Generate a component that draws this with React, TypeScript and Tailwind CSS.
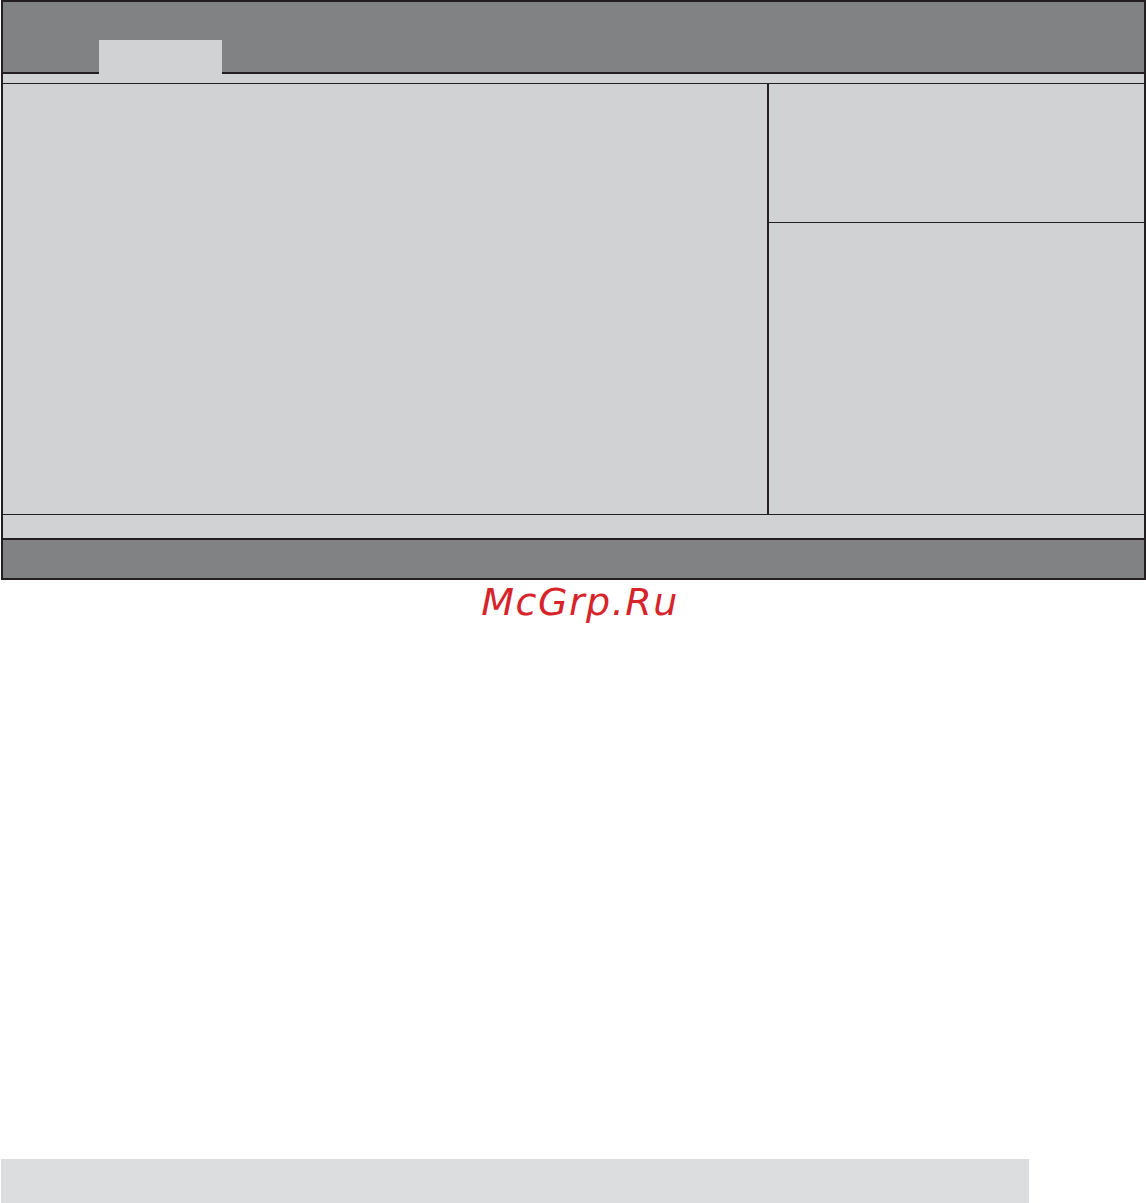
import React from 'react';

// Empty BIOS-style setup screen frame with a watermark below
const App: React.FC = () => {
  return (
    <div className="w-[1146px] h-[1203px] bg-white overflow-hidden">
      {/* Main frame */}
      <div className="ml-px w-[1145px] h-[580px] border-2 border-[#231f20] flex flex-col bg-[#d1d2d4]">
        {/* Header with the active tab */}
        <div className="h-[72px] shrink-0 bg-[#818284] border-b-2 border-[#231f20] flex items-end pl-[96px]">
          <div className="relative w-[123px] h-[34px] -mb-[2px] bg-[#d1d2d4]" />
        </div>

        {/* Thin strip */}
        <div className="h-[10px] shrink-0 border-b border-[#231f20]" />

        {/* Content area */}
        <div className="h-[431px] shrink-0 flex border-b border-[#231f20]">
          <div className="w-[766px] border-r-2 border-[#231f20]" />
          <div className="flex-1 flex flex-col">
            <div className="h-[139px] border-b border-[#231f20]" />
            <div className="flex-1" />
          </div>
        </div>

        {/* Status strip */}
        <div className="h-[25px] shrink-0 border-b-2 border-[#231f20]" />

        {/* Bottom bar */}
        <div className="flex-1 bg-[#818284]" />
      </div>

      {/* Watermark */}
      <div
        className="mt-[3px] h-[38px] pl-[14px] text-center text-[38px] leading-[38px] italic tracking-[1.5px] text-[#d7232a]"
        style={{ fontFamily: '"DejaVu Sans", "Liberation Sans", sans-serif' }}
      >
        McGrp.Ru
      </div>

      {/* Footer band */}
      <div className="mt-[538px] ml-px w-[1028px] h-[44px] bg-[#dcdddf]" />
    </div>
  );
};

export default App;
